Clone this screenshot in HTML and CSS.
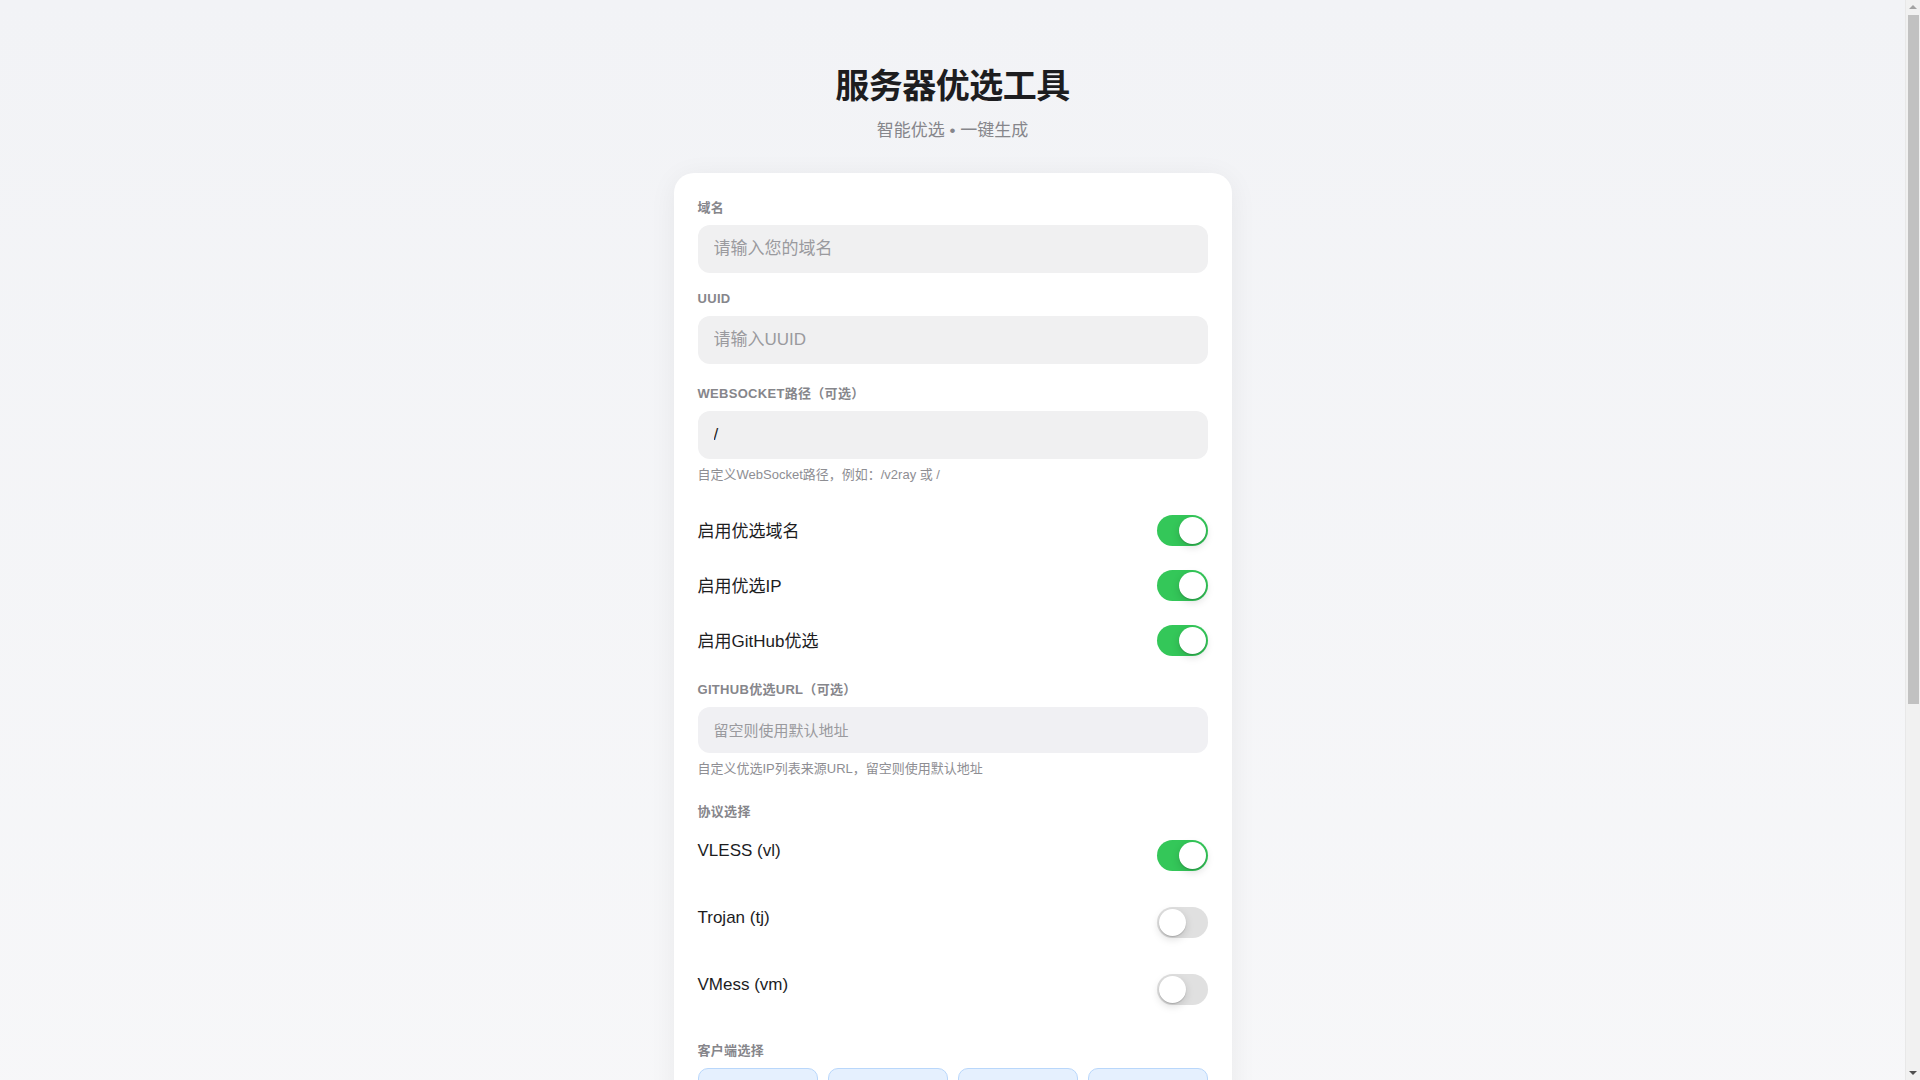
FILE: index.html
```html
<!DOCTYPE html>
<html lang="zh-CN">
<head>
<meta charset="utf-8">
<title>服务器优选工具</title>
<link rel="stylesheet" href="styles.css">
</head>
<body>
<div class="page">
  <header class="header">
    <h1 class="title">服务器优选工具</h1>
    <p class="subtitle">智能优选 • 一键生成</p>
  </header>

  <main class="card">
    <div class="group group-domain">
      <label class="label">域名</label>
      <input class="input" type="text" placeholder="请输入您的域名">
    </div>

    <div class="group group-uuid">
      <label class="label">UUID</label>
      <input class="input" type="text" placeholder="请输入UUID">
    </div>

    <div class="group">
      <label class="label">WebSocket路径（可选）</label>
      <input class="input" type="text" value="/">
      <div class="hint">自定义WebSocket路径，例如：/v2ray 或 /</div>
    </div>

    <div class="switch-list">
      <div class="switch-row">
        <span class="switch-text">启用优选域名</span>
        <span class="switch on"><span class="knob"></span></span>
      </div>
      <div class="switch-row">
        <span class="switch-text">启用优选IP</span>
        <span class="switch on"><span class="knob"></span></span>
      </div>
      <div class="switch-row">
        <span class="switch-text">启用GitHub优选</span>
        <span class="switch on"><span class="knob"></span></span>
      </div>
    </div>

    <div class="group group-github">
      <label class="label">GitHub优选URL（可选）</label>
      <input class="input input-small" type="text" placeholder="留空则使用默认地址">
      <div class="hint">自定义优选IP列表来源URL，留空则使用默认地址</div>
    </div>

    <div class="group group-protocol">
      <label class="label">协议选择</label>
      <div class="proto-list">
        <div class="proto-row">
          <span class="proto-text">VLESS (vl)</span>
          <span class="switch on"><span class="knob"></span></span>
        </div>
        <div class="proto-row">
          <span class="proto-text">Trojan (tj)</span>
          <span class="switch"><span class="knob"></span></span>
        </div>
        <div class="proto-row">
          <span class="proto-text">VMess (vm)</span>
          <span class="switch"><span class="knob"></span></span>
        </div>
      </div>
    </div>

    <div class="group">
      <label class="label">客户端选择</label>
      <div class="client-grid">
        <button class="client-btn">CLASH</button>
        <button class="client-btn">STASH</button>
        <button class="client-btn">SURGE</button>
        <button class="client-btn">SING-BOX</button>
        <button class="client-btn">LOON</button>
        <button class="client-btn">QUANX</button>
        <button class="client-btn">V2RAY</button>
        <button class="client-btn">SHADOWROCKET</button>
      </div>
    </div>

    <button class="generate">生成订阅链接</button>

    <div class="result">
      <div class="label">订阅链接</div>
      <div class="result-box">点击上方按钮生成订阅链接</div>
    </div>
  </main>
</div>

<div class="scrollbar" aria-hidden="true">
  <span class="sb-arrow sb-up"></span>
  <span class="sb-thumb"></span>
  <span class="sb-arrow sb-down"></span>
</div>
</body>
</html>
```

FILE: styles.css
```css
* {
  box-sizing: border-box;
}

html, body {
  margin: 0;
  padding: 0;
}

body {
  font-family: "Liberation Sans", "Noto Sans CJK SC", sans-serif;
  color: #1d1d1f;
  background: linear-gradient(180deg, #f2f3f6 0%, #f9f9fa 100%);
  min-height: 100vh;
}

.page {
  padding: 66px 35px 40px 20px;
  display: flex;
  flex-direction: column;
  align-items: center;
}

.header {
  text-align: center;
  margin-bottom: 31px;
}

.title {
  margin: 0;
  font-size: 34px;
  line-height: 40px;
  font-weight: 700;
  color: #1d1d1f;
  letter-spacing: -0.5px;
}

.subtitle {
  margin: 14px 0 0;
  font-size: 17px;
  line-height: 22px;
  color: #86868b;
}

.card {
  width: 558px;
  background: #ffffff;
  border-radius: 20px;
  padding: 25px 24px 24px;
  box-shadow: 0 4px 28px rgba(0, 0, 0, 0.06);
}

.group {
  margin-bottom: 18px;
}

.group-domain {
  margin-bottom: 16px;
}

.group-uuid {
  margin-bottom: 20px;
}

.label {
  display: block;
  font-size: 13px;
  line-height: 20px;
  font-weight: 700;
  color: #86868b;
  text-transform: uppercase;
  letter-spacing: 0.3px;
  margin-bottom: 7px;
}

.input {
  display: block;
  width: 100%;
  height: 48px;
  border: none;
  outline: none;
  border-radius: 12px;
  background: #f0f0f1;
  padding: 0 16px;
  font-family: inherit;
  font-size: 17px;
  color: #1d1d1f;
}

.input::placeholder {
  color: #9a9a9e;
}

.input-small {
  height: 46px;
  font-size: 15px;
  background: #f0f0f3;
}

.hint {
  margin-top: 8px;
  font-size: 13px;
  line-height: 16px;
  color: #8e8e93;
}

.switch-list {
  padding-top: 2px;
  margin-bottom: 12px;
}

.switch-row {
  display: flex;
  justify-content: space-between;
  align-items: center;
  padding: 12px 0;
}

.switch-text,
.proto-text {
  font-size: 17px;
  line-height: 22px;
  color: #1d1d1f;
}

.switch-text {
  position: relative;
  top: 1px;
}

.switch {
  position: relative;
  width: 51px;
  height: 31px;
  border-radius: 16px;
  background: #e0e0e0;
  flex-shrink: 0;
}

.switch.on {
  background: #34c759;
}

.knob {
  position: absolute;
  top: 2px;
  left: 2px;
  width: 27px;
  height: 27px;
  border-radius: 50%;
  background: #ffffff;
  box-shadow: 0 3px 8px rgba(0, 0, 0, 0.15), 0 1px 1px rgba(0, 0, 0, 0.16);
}

.switch.on .knob {
  left: 22px;
}

.group-github {
  margin-bottom: 25px;
}

.group-protocol {
  margin-bottom: 36px;
}

.group-protocol .label {
  margin-bottom: 18px;
}

.proto-list {
  display: flex;
  flex-direction: column;
  gap: 36px;
}

.proto-row {
  display: flex;
  justify-content: space-between;
  align-items: flex-start;
}

.client-grid {
  display: grid;
  grid-template-columns: repeat(4, 1fr);
  gap: 10px;
}

.client-btn {
  height: 44px;
  border: 1px solid #b9d7fb;
  border-radius: 10px;
  background: #e5f0fe;
  color: #007aff;
  font-family: inherit;
  font-size: 13px;
  font-weight: 700;
  padding: 0;
}

.generate {
  display: block;
  width: 100%;
  height: 50px;
  margin-top: 24px;
  border: none;
  border-radius: 12px;
  background: #007aff;
  color: #ffffff;
  font-family: inherit;
  font-size: 17px;
  font-weight: 700;
}

.result {
  margin-top: 24px;
}

.result-box {
  min-height: 288px;
  border-radius: 12px;
  background: #f0f0f1;
  padding: 16px;
  font-size: 14px;
  color: #9a9a9e;
}

/* visual stand-in for the page scrollbar shown in the screenshot */
.scrollbar {
  position: fixed;
  top: 0;
  right: 0;
  width: 15px;
  height: 100vh;
  background: #f1f1f1;
  border-left: 1px solid #e8e8e8;
}

.sb-thumb {
  position: absolute;
  top: 15px;
  left: 2px;
  width: 11px;
  height: 689px;
  background: #c1c1c1;
}

.sb-arrow {
  position: absolute;
  left: 3px;
  width: 0;
  height: 0;
  border-left: 4px solid transparent;
  border-right: 4px solid transparent;
}

.sb-up {
  top: 5px;
  border-bottom: 4px solid #a3a3a3;
}

.sb-down {
  bottom: 5px;
  border-top: 4px solid #505050;
}
```
